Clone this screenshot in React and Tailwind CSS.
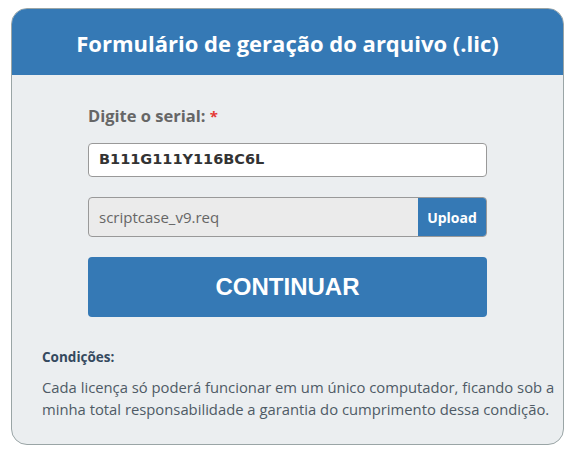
export default function App() {
  return (
    <div className="w-[574px] h-[454px] bg-white pt-[8px] pl-[11px]" style={{ fontFamily: '"Open Sans", sans-serif' }}>
      <div className="w-[553px] h-[437px] rounded-[16px] border border-[#9aa5a6] bg-[#ebeef0] overflow-hidden flex flex-col">
        <div className="h-[67px] bg-[#3579b5] flex items-center justify-center -mx-px -mt-px">
          <h1 className="text-white font-bold text-[22px] pt-[4px]">Formulário de geração do arquivo (.lic)</h1>
        </div>
        <div className="px-[76px] pt-[30px]">
          <label className="block text-[16.5px] font-bold text-[#666] leading-[22px]">
            Digite o serial: <span className="text-[#e53935] text-[15px]">*</span>
          </label>
          <div className="mt-[16px] h-[34px] bg-white border border-[#999] rounded-[4px] flex items-center px-[10px]">
            <span className="text-[14.5px] font-bold text-[#333]" style={{ fontFamily: '"DejaVu Sans", sans-serif' }}>B111G111Y116BC6L</span>
          </div>
          <div className="mt-[20px] h-[40px] bg-[#ebebeb] border border-[#999] rounded-[4px] flex overflow-hidden">
            <div className="flex-1 flex items-center px-[10px] text-[15px] text-[#666]">scriptcase_v9.req</div>
            <button className="w-[68px] bg-[#3579b5] text-white text-[14px] font-bold">Upload</button>
          </div>
          <button className="mt-[20px] w-full h-[60px] bg-[#3579b5] rounded-[4px] text-white text-[24px] font-bold" style={{ fontFamily: '"Liberation Sans", Arial, sans-serif' }}>
            CONTINUAR
          </button>
        </div>
        <div className="pl-[30px] pr-[2px] pt-[30px]">
          <h2 className="text-[13.5px] font-bold text-[#34495e] leading-[20px]">Condições:</h2>
          <p className="mt-[9px] text-[14.8px] text-[#4f5b66] leading-[22px]">
            Cada licença só poderá funcionar em um único computador, ficando sob a minha total responsabilidade a garantia do cumprimento dessa condição.
          </p>
        </div>
      </div>
    </div>
  );
}
